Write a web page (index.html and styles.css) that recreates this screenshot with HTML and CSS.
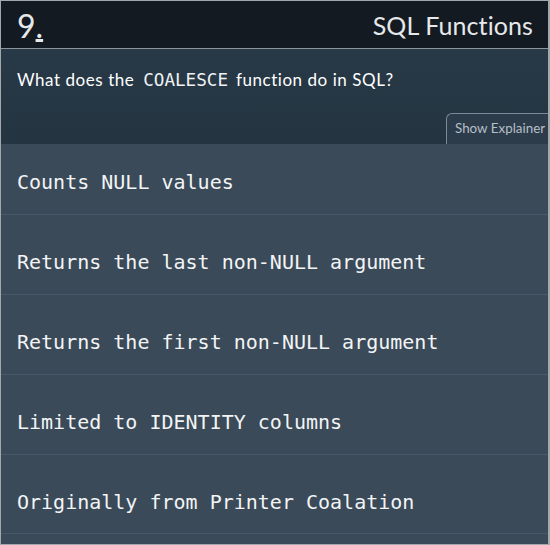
FILE: index.html
```html
<!DOCTYPE html>
<html>
<head>
<meta charset="utf-8">
<link rel="stylesheet" href="styles.css">
</head>
<body>
<div class="card">
  <header class="head">
    <span class="num">9<span class="dot">.</span></span>
    <span class="topic">SQL Functions</span>
  </header>
  <section class="question">
    <p class="qtext">What does the <code class="code">COALESCE</code> function do in SQL?</p>
    <div class="tabrow"><button class="tab">Show Explainer</button></div>
  </section>
  <ul class="options">
    <li class="opt">Counts NULL values</li>
    <li class="opt">Returns the last non-NULL argument</li>
    <li class="opt">Returns the first non-NULL argument</li>
    <li class="opt">Limited to IDENTITY columns</li>
    <li class="opt">Originally from Printer Coalation</li>
  </ul>
</div>
</body>
</html>
```

FILE: styles.css
```css
* { box-sizing: border-box; }
html, body { margin: 0; padding: 0; }
body { width: 550px; height: 545px; overflow: hidden; background: #3a4a58; }
.card {
  width: 550px;
  height: 545px;
  border: 1px solid #a3a8ad;
  border-right-width: 2px;
  background: #3a4a58;
  display: flex;
  flex-direction: column;
  overflow: hidden;
  font-family: Lato, "Open Sans", sans-serif;
}
.head {
  height: 48px;
  background: #141a21;
  border-bottom: 1px solid #8c949b;
  display: flex;
  align-items: center;
  justify-content: space-between;
  padding: 0 15px 0 16px;
  color: #e6e8ea;
  flex: none;
}
.num { font-size: 32px; line-height: 1; font-weight: 400; padding-top: 3px; }
.dot { text-decoration: underline; text-decoration-thickness: 3px; text-underline-offset: 1px; }
.topic { font-size: 25px; font-weight: 400; letter-spacing: 0.1px; }
.question {
  background: linear-gradient(#283947, #243441);
  height: 95px;
  flex: none;
  display: flex;
  flex-direction: column;
  justify-content: space-between;
}
.qtext {
  margin: 0;
  padding: 21px 16px 0 16px;
  color: #ffffff;
  font-size: 17px;
  letter-spacing: 0.55px;
  line-height: 20px;
}
.code {
  font-family: "DejaVu Sans Mono", monospace;
  font-size: 17.6px;
  letter-spacing: 0;
  padding: 0 3px 0 4px;
  color: #f0f2f4;
}
.tabrow { display: flex; justify-content: flex-end; }
.tab {
  width: 104px;
  height: 31px;
  margin-right: -2px;
  border: 1px solid #7d8a96;
  border-bottom: none;
  border-right: none;
  border-radius: 6px 0 0 0;
  background: #2c3c4a;
  color: #b5bfc9;
  font-family: Lato, "Open Sans", sans-serif;
  font-size: 13.4px;
  line-height: 20px;
  text-align: left;
  padding: 0 0 2px 8px;
  white-space: nowrap;
  overflow: hidden;
  display: block;
}
.options { list-style: none; margin: 0; padding: 0; flex: 1; }
.opt {
  height: 80px;
  padding: 35px 16px 0 16px;
  border-top: 1px solid #475868;
  font-family: "DejaVu Sans Mono", monospace;
  font-size: 20px;
  line-height: 24px;
  color: #f2f4f6;
  white-space: nowrap;
}
.opt:first-child { height: 70px; border-top: none; padding-top: 26px; }
.opt:last-child { border-bottom: 1px solid #475868; }
```
